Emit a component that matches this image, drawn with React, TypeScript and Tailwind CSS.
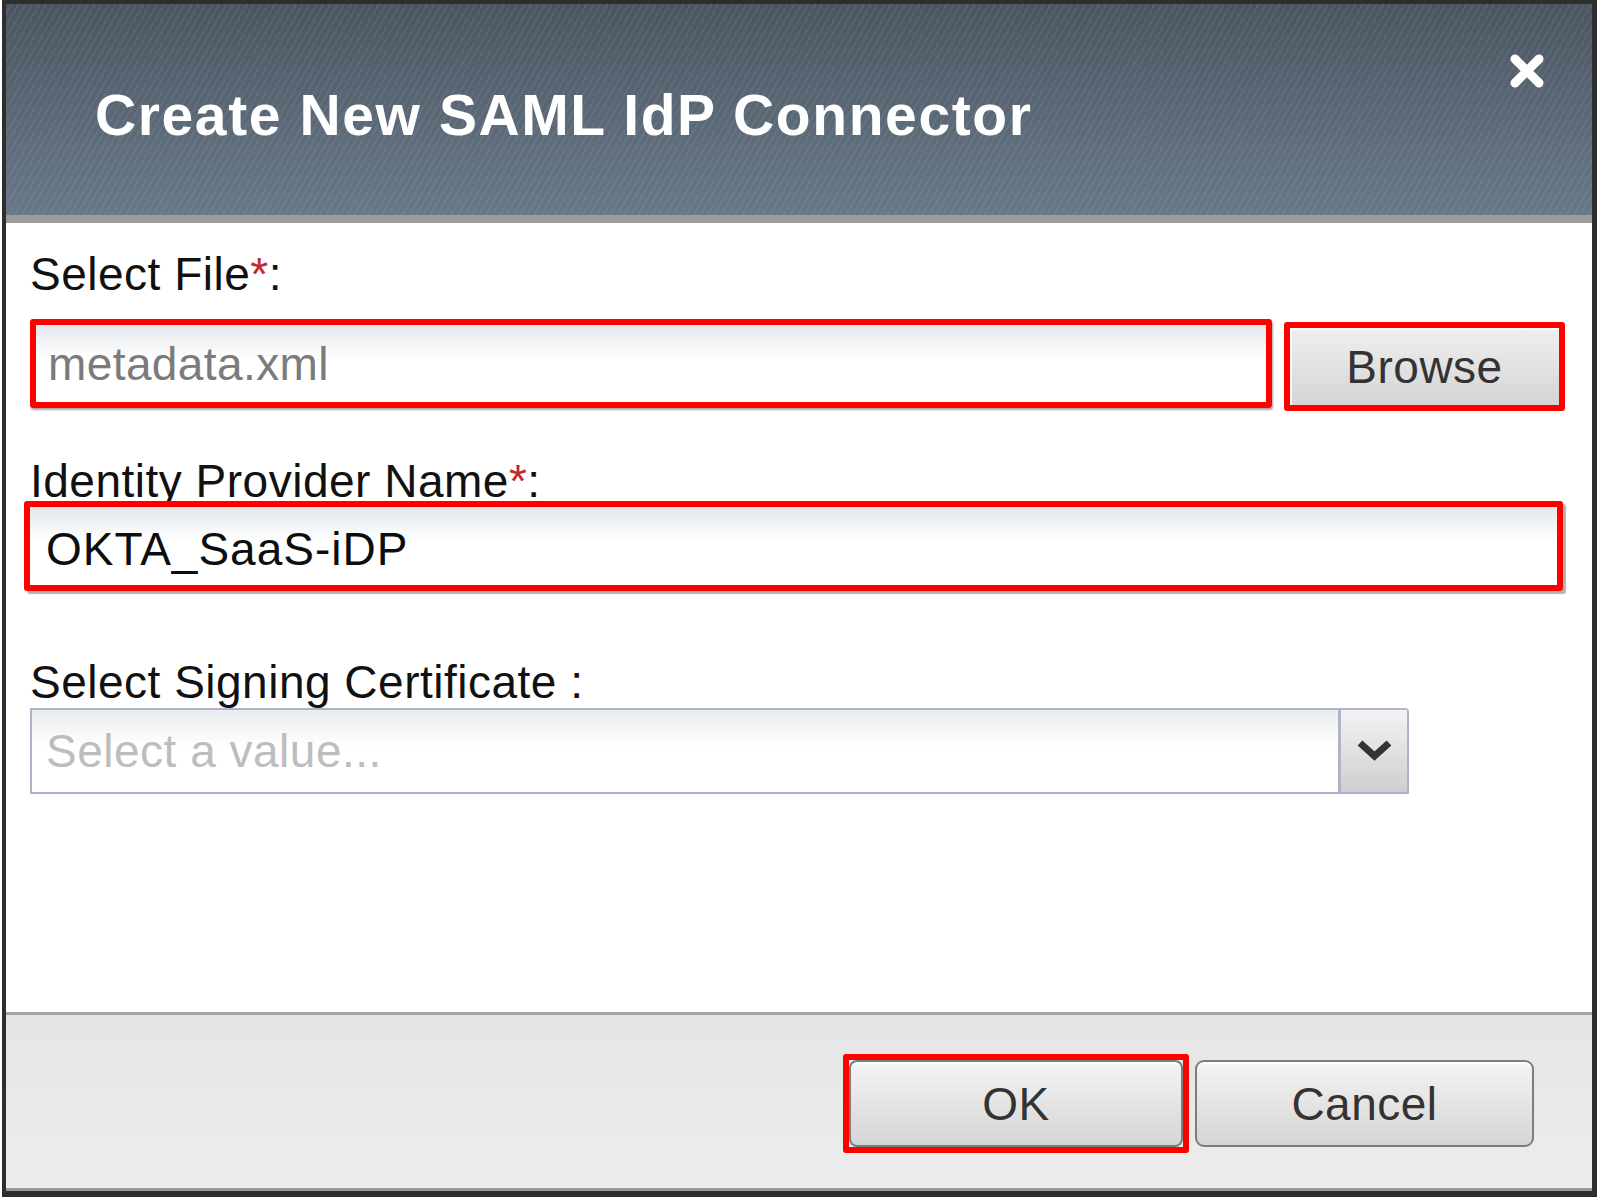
import React from "react";

const font = "font-['Liberation_Sans',Arial,sans-serif]";

export default function App() {
  return (
    <div className={`w-[1601px] h-[1203px] bg-white overflow-hidden ${font}`}>
      <div className="ml-[2px] w-[1595px] h-[1197px] border-t-[4px] border-l-[4px] border-r-[5px] border-b-[6px] border-[#2e2e2e] flex flex-col">
        {/* Header */}
        <div className="h-[211px] flex items-start justify-between pl-[89px] pr-[46px] bg-[image:repeating-linear-gradient(120deg,rgba(255,255,255,0)_0px,rgba(255,255,255,0)_4px,rgba(255,255,255,0.055)_4px,rgba(255,255,255,0.055)_6px),linear-gradient(to_bottom,#4b5561,#687888)]">
          <div className="mt-[83px] text-[57px] leading-none font-bold tracking-[1.6px] text-white">
            Create New SAML IdP Connector
          </div>
          <svg width="38" height="38" viewBox="0 0 38 38" className="mt-[48px]">
            <path d="M7 7 L31 31 M31 7 L7 31" stroke="#ffffff" strokeWidth="9" strokeLinecap="round" />
          </svg>
        </div>
        <div className="h-[8px] bg-[#9b9b9b]" />

        {/* Body */}
        <div className="flex-1 bg-white pl-[24px] pt-[28px] flex flex-col items-start">
          <div className="text-[46px] leading-none tracking-[0.5px] text-[#111]">
            Select File<span className="text-[#c0282d]">*</span>:
          </div>
          <div className="mt-[22px] flex items-start">
            <div className="w-[1242px] h-[89px] border-[6px] border-[#ff0000] rounded-[3px] shadow-[1px_2px_2px_rgba(0,0,0,0.35)] bg-linear-to-b from-[#e4e8eb] via-white via-45% to-white flex items-center pl-[12px]">
              <span className="text-[46px] leading-none tracking-[0.4px] text-[#7b7b7b]">metadata.xml</span>
            </div>
            <div className="ml-[12px] mt-[3px] w-[281px] h-[89px] border-[6px] border-[#ff0000] rounded-[3px]">
              <div className="w-full h-full bg-linear-to-b from-[#efefef] to-[#d5d5d5] shadow-[inset_2px_2px_0_rgba(255,255,255,0.8)] flex items-center justify-center">
                <span className="text-[46px] leading-none tracking-[0.5px] text-[#333]">Browse</span>
              </div>
            </div>
          </div>

          <div className="mt-[47px] text-[46px] leading-none tracking-[0.5px] text-[#111]">
            Identity Provider Name<span className="text-[#c0282d]">*</span>:
          </div>
          <div className="-mt-[3px] -ml-[6px] w-[1539px] h-[90px] border-[6px] border-[#ff0000] rounded-[3px] shadow-[3px_3px_1px_rgba(0,0,0,0.3)] bg-linear-to-b from-[#e4e8eb] via-white via-45% to-white flex items-center pl-[16px] pt-[6px]">
            <span className="text-[46px] leading-none tracking-[1px] text-[#0d0d0d]">OKTA_SaaS-iDP</span>
          </div>

          <div className="mt-[68px] text-[46px] leading-none tracking-[0.5px] text-[#111]">
            Select Signing Certificate :
          </div>
          <div className="mt-[3px] w-[1379px] h-[86px] border-[2px] border-[#b1b4c8] rounded-tr-[4px] flex">
            <div className="flex-1 bg-linear-to-b from-[#e9ecee] via-white via-45% to-white flex items-center pl-[14px]">
              <span className="text-[46px] leading-none tracking-[0.5px] text-[#bdbdbd]">Select a value...</span>
            </div>
            <div className="w-[69px] border-l-[3px] border-[#b1b4c8] bg-linear-to-b from-[#f3f3f3] to-[#cfcfcf] flex items-center justify-center">
              <svg width="37" height="22" viewBox="0 0 37 22" className="mt-[-3px]">
                <path d="M4 4 L18.5 17 L33 4" fill="none" stroke="#333333" strokeWidth="7" strokeLinejoin="miter" />
              </svg>
            </div>
          </div>
        </div>

        {/* Footer */}
        <div className="h-[179px] border-t-[3px] border-b-[3px] border-t-[#a2a2a2] border-b-[#9a9a9a] bg-linear-to-b from-[#e5e5e5] to-[#ededed] flex items-start justify-end pr-[58px] pt-[39px] gap-[6px]">
          <div className="w-[346px] h-[99px] border-[6px] border-[#ff0000] rounded-[3px]">
            <div className="w-full h-full rounded-[8px] border-[2px] border-[#7d7d7d] bg-linear-to-b from-[#f4f4f4] to-[#d5d5d5] shadow-[inset_0_2px_0_rgba(255,255,255,0.9)] flex items-center justify-center">
              <span className="text-[46px] leading-none tracking-[0.5px] text-[#333]">OK</span>
            </div>
          </div>
          <div className="mt-[6px] w-[339px] h-[87px] rounded-[9px] border-[2px] border-[#7d7d7d] bg-linear-to-b from-[#f4f4f4] to-[#d5d5d5] shadow-[inset_0_2px_0_rgba(255,255,255,0.9)] flex items-center justify-center">
            <span className="text-[46px] leading-none tracking-[0.5px] text-[#333]">Cancel</span>
          </div>
        </div>
      </div>
    </div>
  );
}
